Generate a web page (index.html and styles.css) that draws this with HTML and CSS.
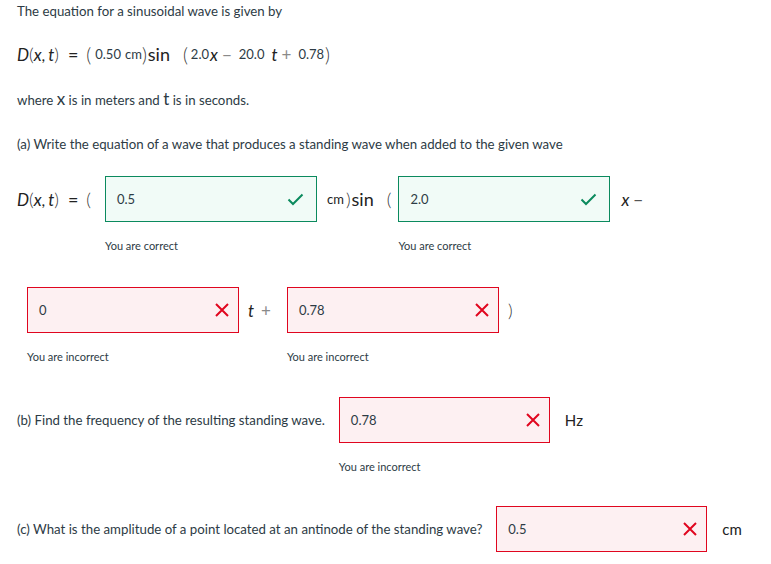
FILE: index.html
```html
<!DOCTYPE html>
<html>
<head>
<meta charset="utf-8">
<link rel="stylesheet" href="styles.css">
</head>
<body>
<div class="page">
  <p class="line l1">The equation for a sinusoidal wave is given by</p>
  <div class="eq">
    <span class="mi">D</span><span class="paren">(</span><span class="mi">x</span><span class="comma">,</span><span class="mi t">t</span><span class="paren">)</span>
    <span class="op eqs">=</span>
    <span class="paren big">(</span><span class="num sm">0.50</span><span class="num cmu">cm</span><span class="paren big">)</span><span class="fn">sin</span>
    <span class="paren big sp">(</span><span class="num">2.0</span><span class="mi">x</span><span class="op grey">−</span><span class="num">20.0</span><span class="mi tt">t</span><span class="op grey">+</span><span class="num">0.78</span><span class="paren big">)</span>
  </div>
  <p class="line l3">where <span class="var">x</span> is in meters and <span class="var">t</span> is in seconds.</p>
  <p class="line l4">(a) Write the equation of a wave that produces a standing wave when added to the given wave</p>

  <div class="row row-a1">
    <div class="mathtxt"><span class="mi">D</span><span class="paren">(</span><span class="mi">x</span><span class="comma">,</span><span class="mi t">t</span><span class="paren">)</span><span class="op eqs">=</span><span class="paren">(</span></div>
    <div class="field first">
      <div class="box ok"><span class="val">0.5</span>
        <svg class="icon-check" width="17" height="13" viewBox="0 0 17 13"><path d="M1.5 6.5 L6 11 L15.5 1.5" fill="none" stroke="#0b8a5e" stroke-width="2"/></svg>
      </div>
      <div class="msg">You are correct</div>
    </div>
    <div class="mathtxt"><span class="unit">cm</span><span class="paren">)</span><span class="fn">sin</span><span class="paren sp">(</span></div>
    <div class="field second">
      <div class="box ok"><span class="val">2.0</span>
        <svg class="icon-check" width="17" height="13" viewBox="0 0 17 13"><path d="M1.5 6.5 L6 11 L15.5 1.5" fill="none" stroke="#0b8a5e" stroke-width="2"/></svg>
      </div>
      <div class="msg">You are correct</div>
    </div>
    <div class="mathtxt"><span class="mi">x</span><span class="op grey dk">−</span></div>
  </div>

  <div class="row row-a2">
    <div class="field">
      <div class="box bad"><span class="val">0</span>
        <svg class="icon-x" width="14" height="14" viewBox="0 0 14 14"><path d="M1 1 L13 13 M13 1 L1 13" fill="none" stroke="#e0061f" stroke-width="2"/></svg>
      </div>
      <div class="msg">You are incorrect</div>
    </div>
    <div class="mathtxt"><span class="mi">t</span><span class="op grey plus2">+</span></div>
    <div class="field">
      <div class="box bad"><span class="val">0.78</span>
        <svg class="icon-x" width="14" height="14" viewBox="0 0 14 14"><path d="M1 1 L13 13 M13 1 L1 13" fill="none" stroke="#e0061f" stroke-width="2"/></svg>
      </div>
      <div class="msg">You are incorrect</div>
    </div>
    <div class="mathtxt"><span class="paren">)</span></div>
  </div>

  <div class="row row-b">
    <div class="qtxt">(b) Find the frequency of the resulting standing wave.</div>
    <div class="field wide">
      <div class="box bad"><span class="val">0.78</span>
        <svg class="icon-x" width="14" height="14" viewBox="0 0 14 14"><path d="M1 1 L13 13 M13 1 L1 13" fill="none" stroke="#e0061f" stroke-width="2"/></svg>
      </div>
      <div class="msg">You are incorrect</div>
    </div>
    <div class="qtxt unit-lg">Hz</div>
  </div>

  <div class="row row-c">
    <div class="qtxt">(c) What is the amplitude of a point located at an antinode of the standing wave?</div>
    <div class="field wide">
      <div class="box bad"><span class="val">0.5</span>
        <svg class="icon-x" width="14" height="14" viewBox="0 0 14 14"><path d="M1 1 L13 13 M13 1 L1 13" fill="none" stroke="#e0061f" stroke-width="2"/></svg>
      </div>
    </div>
    <div class="qtxt unit-lg">cm</div>
  </div>
</div>
</body>
</html>
```

FILE: styles.css
```css
html, body {
  margin: 0;
  padding: 0;
  background: #ffffff;
}
body {
  font-family: Lato, "Noto Sans", sans-serif;
  color: #2d3b45;
}
.page {
  padding: 0 17px;
}
.line {
  margin: 0;
  font-size: 13.25px;
  line-height: 22px;
}
.eq {
  display: flex;
  align-items: center;
  height: 28px;
  margin-top: 18px;
  color: #222;
}
.l3 { margin-top: 20px; }
.l4 { margin-top: 22px; }
.var {
  font-size: 17px;
}
.mi {
  font-style: italic;
  font-size: 17px;
  color: #222;
}
.mi.t { margin-left: 3px; }
.mi.tt { margin-left: 6px; }
.comma { font-size: 16px; }
.paren {
  font-size: 18px;
  color: #333;
  font-weight: 300;
}
.paren.big { font-size: 19px; }
.paren.sp { margin-left: 13px; }
.op {
  font-size: 17px;
  margin: 0 4px 0 4px;
}
.op.eqs { margin: 0 8px 0 9px; font-size: 18px; }
.op.grey { color: #8a8a8a; }
.op.dk { color: #555; }
.op.plus2 { margin: 0 6px 0 7px; }
.num {
  font-size: 13px;
  color: #2d3b45;
  margin: 0 1px 0 3px;
}
.num.sm { margin: 0 0 0 4px; }
.num.cmu { margin: 0 0 0 4px; }
.fn {
  font-size: 18px;
  color: #222;
  margin-left: 1px;
}

.row {
  display: flex;
  align-items: flex-start;
}
.row-a1 { margin-top: 21px; }
.row-a2 { margin-top: 33px; }
.row-b { margin-top: 32px; }
.row-c { margin-top: 31px; }

.mathtxt {
  height: 46px;
  display: flex;
  align-items: center;
  color: #222;
}
.mathtxt .paren { font-size: 18px; }
.unit {
  font-size: 13px;
  margin-right: 2px;
  margin-left: 1px;
}
.field {
  margin: 0 9px 0 10px;
  width: 212px;
}
.field.first { margin-left: 14px; }
.field.second { margin-left: 7px; margin-right: 11px; }
.field.wide {
  margin: 0 15px 0 14px;
  width: 211px;
}
.box {
  box-sizing: border-box;
  height: 46px;
  display: flex;
  align-items: center;
  justify-content: space-between;
  padding: 0 12px 0 11px;
  font-size: 13px;
  color: #2d3b45;
}
.box.ok {
  border: 1px solid #0b8a5e;
  background: #f1fbf7;
}
.box.bad {
  border: 1px solid #e0061f;
  background: #fdf0f2;
  padding-right: 9px;
}
.msg {
  margin-top: 16px;
  font-size: 11px;
  line-height: 16px;
  color: #2d3b45;
}
.qtxt {
  height: 46px;
  display: flex;
  align-items: center;
  font-size: 13.25px;
  white-space: nowrap;
}
.unit-lg {
  font-size: 15px;
  color: #222;
}
```
